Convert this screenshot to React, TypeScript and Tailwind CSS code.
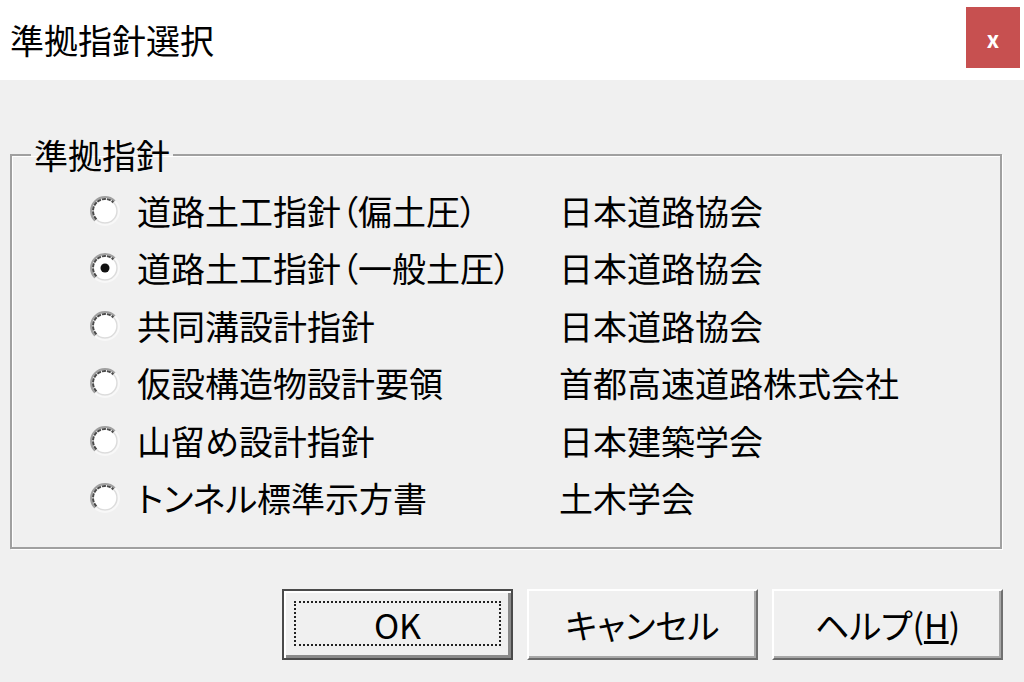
import React, { useState } from 'react';

const options = [
  { name: '道路土工指針（偏土圧）', org: '日本道路協会' },
  { name: '道路土工指針（一般土圧）', org: '日本道路協会' },
  { name: '共同溝設計指針', org: '日本道路協会' },
  { name: '仮設構造物設計要領', org: '首都高速道路株式会社' },
  { name: '山留め設計指針', org: '日本建築学会' },
  { name: 'トンネル標準示方書', org: '土木学会' },
];

function Radio({ checked }: { checked: boolean }) {
  return (
    <svg width="32" height="32" viewBox="0 0 32 32" className="shrink-0">
      <circle cx="16" cy="16" r="13" fill="#ffffff" />
      <path d="M6.1 25.9 A14 14 0 0 1 25.9 6.1" fill="none" stroke="#a0a0a0" strokeWidth="2" />
      <path d="M7.5 24.5 A12 12 0 0 1 24.5 7.5" fill="none" stroke="#4a4a4a" strokeWidth="2" strokeDasharray="4 1" />
      <path d="M25.9 6.1 A14 14 0 0 1 6.1 25.9" fill="none" stroke="#f8f8f8" strokeWidth="2" />
      <path d="M24.5 7.5 A12 12 0 0 1 7.5 24.5" fill="none" stroke="#dcdcdc" strokeWidth="1.5" />
      {checked && <circle cx="16" cy="16" r="4.5" fill="#111111" />}
    </svg>
  );
}

function DlgButton({ label, isDefault }: { label: React.ReactNode; isDefault?: boolean }) {
  return (
    <button
      className={
        isDefault
          ? 'relative w-[231px] h-[71px] bg-[#f0f0f0] border-2 border-[#4a4a4a] shadow-[inset_2px_2px_0_#ffffff,inset_-3px_-3px_0_#8a8a8a] text-[34px] leading-none text-black'
          : 'relative w-[231px] h-[71px] bg-[#f0f0f0] border-2 border-t-white border-l-white border-r-[#707070] border-b-[#6a6a6a] shadow-[inset_-2px_-2px_0_#a8a8a8] text-[34px] leading-none text-black'
      }
    >
      {isDefault && (
        <span className="absolute left-[10px] right-[10px] top-[10px] bottom-[12px] border-2 border-dotted border-[#222222]" />
      )}
      <span className="relative">{label}</span>
    </button>
  );
}

export default function App() {
  const [selected, setSelected] = useState(1);

  return (
    <div className="w-[1024px] h-[682px] overflow-hidden bg-[#f0f0f0] flex flex-col font-['Noto_Sans_CJK_JP',sans-serif] [font-feature-settings:'palt'] text-black">
      <div className="h-[80px] bg-white flex items-start justify-between pl-[10px] pr-[4px]">
        <span className="text-[34px] leading-[80px]">準拠指針選択</span>
        <button className="mt-[7px] w-[54px] h-[61px] bg-[#c75050] text-white text-[22px] font-bold leading-none">x</button>
      </div>

      <fieldset className="mt-[55px] ml-[10px] w-[992px] border-2 border-[#a0a0a0] shadow-[inset_1px_1px_0_#ffffff,1px_1px_0_#ffffff] pb-[20px]">
        <legend className="ml-[19px] px-[3px] text-[34px] leading-[40px]">準拠指針</legend>
        <div className="flex flex-col pt-[7px] pl-[77px]">
          {options.map((o, i) => (
            <div
              key={o.name}
              className="h-[57.5px] flex items-center cursor-default"
              onClick={() => setSelected(i)}
            >
              <Radio checked={selected === i} />
              <span className="ml-[16px] w-[422px] text-[34px] leading-none">{o.name}</span>
              <span className="text-[34px] leading-none">{o.org}</span>
            </div>
          ))}
        </div>
      </fieldset>

      <div className="mt-[40px] flex justify-end gap-[14px] pr-[21px]">
        <DlgButton label="OK" isDefault />
        <DlgButton label="キャンセル" />
        <DlgButton label={<>ヘルプ(<span className="underline">H</span>)</>} />
      </div>
    </div>
  );
}
